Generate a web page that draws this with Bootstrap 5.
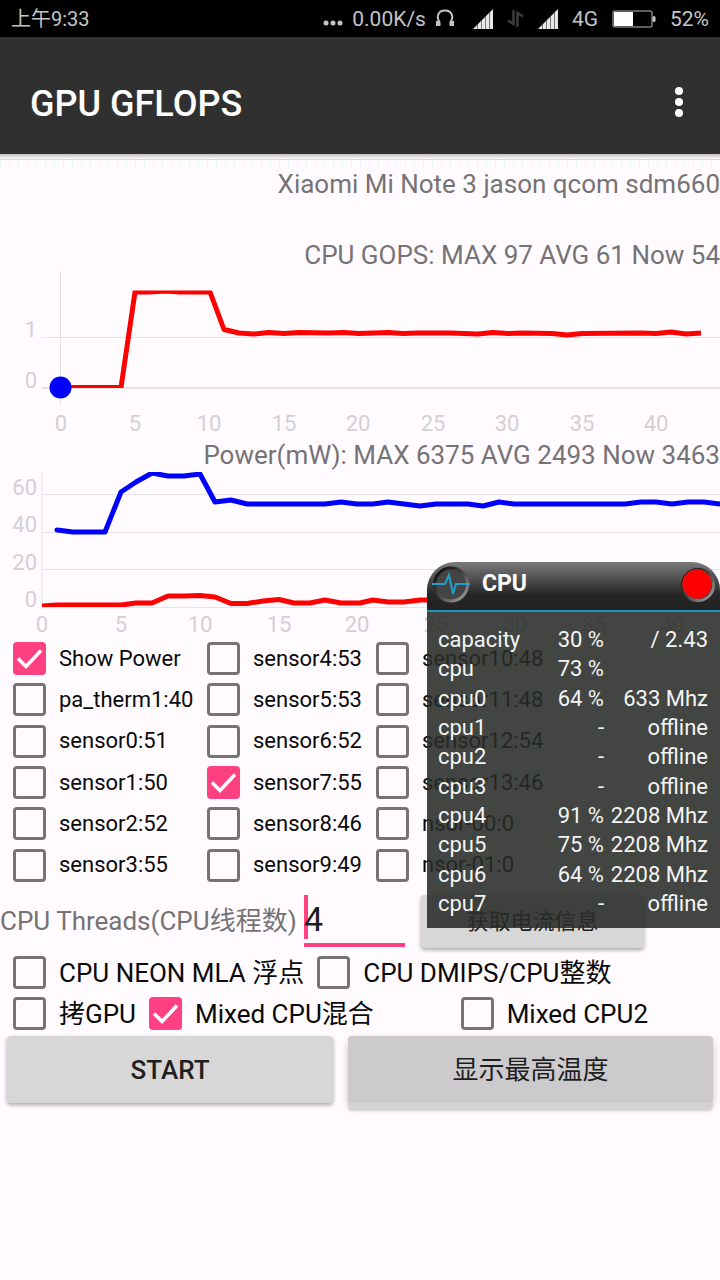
<!DOCTYPE html>
<html lang="zh-CN">
<head>
<meta charset="utf-8">
<meta name="viewport" content="width=device-width, initial-scale=1">
<title>GPU GFLOPS</title>
<link href="https://cdn.jsdelivr.net/npm/bootstrap@5.3.0/dist/css/bootstrap.min.css" rel="stylesheet">
<style>
  :root { --pink: #ff4081; --page: #fffbff; }
  body { background: var(--page); color: #0a0a0a; font-family: Roboto, "Noto Sans CJK SC", sans-serif; font-size: 26px; line-height: 30px; }
  .status-bar { height: 37px; background: #000; color: #c4c4c4; font-size: 20px; line-height: 38px; padding: 0 11px; }
  .status-icons { gap: 14px; font-size: 21px; }
  .status-net { gap: 9px; }
  .app-bar { height: 117px; background: #303030; padding: 17px 28px 0 30px; }
  .app-title { color: #fff; font-size: 36px; font-weight: 500; line-height: 44px; }
  .bar-edge { height: 15px; background:
      linear-gradient(#f3c3ee, #f3c3ee) 0 5px / 100% 1px no-repeat,
      linear-gradient(#bdbdbd, rgba(255,251,255,0)) 0 0 / 100% 5px no-repeat,
      repeating-linear-gradient(90deg, #e6f7f8 0 1px, transparent 1px 9px) 0 0 / 100% 12px no-repeat; }
  .caption { color: #757375; text-align: right; white-space: nowrap; }
  .device-line { margin-bottom: 41px; }
  .plot { display: block; width: 100%; }
  .plot text { font-size: 22px; fill: #d3d0d3; }
  .plot polyline { fill: none; stroke-width: 5; stroke-linejoin: round; }
  .plot line { stroke: #e6e2e6; }
  .sensors { display: grid; grid-template-columns: 194px 169px 1fr; grid-auto-rows: 1fr; min-height: 248px; font-size: 22px; }
  .tick { display: flex; align-items: center; gap: 13px; padding-left: 13px; white-space: nowrap; }
  .tick .form-check-input { float: none; flex: none; margin: 0; width: 33px; height: 33px; border: 3px solid #757375; border-radius: 4px; background-color: transparent; box-shadow: none; }
  .tick .form-check-input:checked { border: 0; background-color: var(--pink); background-size: 33px 33px;
      background-image: url("data:image/svg+xml,%3Csvg xmlns='http://www.w3.org/2000/svg' viewBox='0 0 33 33'%3E%3Cpath d='M5 16.500l8 8L28 8.500' fill='none' stroke='%23fff' stroke-width='3.500'/%3E%3C/svg%3E"); }
  .tick-row { height: 41px; }
  .threads { height: 66px; }
  .threads label { color: #757375; width: 304px; padding-top: 4px; white-space: nowrap; }
  .thread-box { position: relative; width: 101px; padding-top: 9px; }
  .thread-box::before { content: ""; position: absolute; left: 0; top: 9px; width: 4px; height: 44px; background: var(--pink); }
  .thread-box input { position: relative; display: block; width: 100%; height: 52px; border: 0; border-bottom: 4px solid var(--pink); border-radius: 0; background: transparent; color: #1c1c1c; font-size: 34px; line-height: 48px; padding: 0; outline: 0; }
  .key { border: 0; border-radius: 4px; background: #d7d7d7; color: #1f1f1f; font-size: 26px; font-weight: 500; line-height: 30px; padding: 0; box-shadow: 0 2px 4px rgba(0,0,0,.35); }
  .key-info { width: 223px; height: 53px; margin: 9px 0 0 16px; font-size: 22px; font-weight: 400; }
  .key-row { display: grid; grid-template-columns: 326fr 365fr; gap: 15px; padding: 2px 7px 24px; }
  .key-row .key { height: 67px; }
  .key-temp { background: #cdcacd; font-weight: 400; box-shadow: 0 8px 2px #d4d1d4, 0 4px 8px rgba(0,0,0,.2); }
  .stage { position: relative; }
  .monitor { position: absolute; right: 0; bottom: 24px; width: 293px; border-radius: 28px 28px 0 0; overflow: hidden; color: #f4f4f4; }
  .monitor-head { height: 50px; border-bottom: 2px solid #1d93bd; background: linear-gradient(#7a7a7a 0, #5c5c5c 25%, #262626 68%, #222 100%); padding: 0 5px; }
  .monitor-name { color: #fff; font-size: 23px; font-weight: 700; line-height: 28px; margin: 0 auto 5px 12px; }
  .monitor-body { background: rgba(40,43,39,.88); padding: 13px 12px 10px 11px; font-size: 22px; line-height: 29px; }
  .monitor-body table { width: 100%; height: 293px; border-collapse: collapse; white-space: nowrap; }
  .monitor-body th { font-weight: 400; }
  .monitor-body td { text-align: right; }
  .monitor-body th, .monitor-body td { padding: 0; }
  .col-load { width: 60px; }
  .col-clock { width: 104px; }
</style>
</head>
<body>
<header>
  <div class="status-bar d-flex align-items-center">
    <span class="me-auto">上午9:33</span>
    <div class="status-icons d-flex align-items-center">
      <span class="status-net d-flex align-items-center">
        <svg width="20" height="6" viewBox="0 0 20 6" fill="#c4c4c4" class="mt-2"><circle cx="3" cy="3" r="2.500"/><circle cx="10" cy="3" r="2.500"/><circle cx="17" cy="3" r="2.500"/></svg>
        <span>0.00K/s</span>
        <svg width="20" height="19" viewBox="0 0 20 19" fill="none" stroke="#c4c4c4" stroke-width="2"><path d="M4.500 17V13C1 8 3 1.500 10 1.500S19 8 15.500 13V17"/><path d="M2.500 12v5M17.500 12v5" stroke-width="3"/></svg>
      </span>
      <svg width="24" height="20" viewBox="-4 0 24 20" fill="#e8e8e8"><path d="M0 20L4 16V20ZM4.500 15.500L8 12V20H4.500ZM8.500 11.500L12 8V20H8.500ZM12.500 7.500L16 4V20H12.500ZM16.500 3.500L20 0V20H16.500Z"/></svg>
      <svg width="17" height="17" viewBox="0 0 17 17" fill="none" stroke="#3c3c3c" stroke-width="2.500"><path d="M6.500 0V14L1 10.500M10.500 17V3L16 6.500"/></svg>
      <svg width="20" height="20" viewBox="0 0 20 20" fill="#e8e8e8"><path d="M0 20L4 16V20ZM4.500 15.500L8 12V20H4.500ZM8.500 11.500L12 8V20H8.500ZM12.500 7.500L16 4V20H12.500ZM16.500 3.500L20 0V20H16.500Z"/></svg>
      <span>4G</span>
      <svg width="44" height="18" viewBox="0 0 44 18"><rect x="1" y="1" width="39" height="16" rx="2" fill="none" stroke="#7c7c7c" stroke-width="1.500"/><rect x="2" y="2" width="19" height="14" fill="#fff"/><rect x="40.500" y="6" width="3" height="6" rx="1.500" fill="#c4c4c4"/></svg>
      <span>52%</span>
    </div>
  </div>
  <div class="app-bar d-flex align-items-center">
    <h1 class="app-title m-0 me-auto">GPU GFLOPS</h1>
    <button type="button" class="btn p-0 border-0 d-flex" aria-label="更多">
      <svg width="26" height="34" viewBox="0 0 26 34" fill="#fff"><circle cx="13" cy="4" r="4"/><circle cx="13" cy="15" r="4"/><circle cx="13" cy="26" r="4"/></svg>
    </button>
  </div>
</header>
<main>
  <div class="stage">
    <div class="bar-edge"></div>
    <div class="caption device-line">Xiaomi Mi Note 3 jason qcom sdm660</div>
    <div class="caption">CPU GOPS: MAX 97 AVG 61 Now 54</div>
    <svg class="plot" viewBox="0 0 720 170">
      <clipPath id="gopsArea"><rect x="42" y="20.500" width="678" height="97.500"/></clipPath>
      <line x1="60.500" y1="1" x2="60.500" y2="135"/>
      <line x1="42" y1="67.500" x2="720" y2="67.500"/>
      <line x1="42" y1="118" x2="720" y2="118" stroke-width="2"/>
      <polyline clip-path="url(#gopsArea)" stroke="#f00" points="60,117.500 121,117.500 135,22 150,22 165,21 180,22 210,22 224,59.500 239,63 254,64 269,62.500 284,63.500 299,62.500 329,63 344,62.500 359,63.500 374,63 388,62.500 403,63.500 418,63 450,63 478,64 493,62.500 508,63.500 522,63 552,63.500 567,65 582,63.500 641,63 656,63.500 671,62 686,64 701,63"/>
      <circle cx="60.500" cy="117.500" r="11" fill="#00f"/>
      <g text-anchor="end"><text x="37" y="67">1</text><text x="37" y="118">0</text></g>
      <g text-anchor="middle"><text x="61" y="161">0</text><text x="135" y="161">5</text><text x="209" y="161">10</text><text x="284" y="161">15</text><text x="358" y="161">20</text><text x="433" y="161">25</text><text x="507" y="161">30</text><text x="582" y="161">35</text><text x="656" y="161">40</text></g>
    </svg>
    <div class="caption">Power(mW): MAX 6375 AVG 2493 Now 3463</div>
    <svg class="plot" viewBox="0 0 720 168">
      <clipPath id="powerArea"><rect x="42" y="2" width="678" height="135"/></clipPath>
      <path d="M42 2V137M42 24.500H720M42 62.500H720M42 99.500H720M42 137.500H720" stroke="#e6e2e6" fill="none"/>
      <polyline clip-path="url(#powerArea)" stroke="#f00" points="42,136 57,135 121,135 136,133 152,133 168,126 184,126 200,125.500 215,127 231,133.500 247,133.500 263,131 279,129.500 294,133 310,133 325,130 341,133 360,133 373,130 388,132 404,132 420,130 440,130"/>
      <polyline clip-path="url(#powerArea)" stroke="#00f" stroke-linecap="round" points="57,60 73,62 105,62 121,22 136,12 152,3 168,6 184,6 200,4 215,32 231,30 247,34 325,34 341,32 357,34 373,34 388,32 404,34 420,36 436,34 468,34 483,36 499,32 514,34 625,34 641,32 656,32 672,34 688,32 704,32 720,34"/>
      <g text-anchor="end"><text x="37" y="25">60</text><text x="37" y="62">40</text><text x="37" y="100">20</text><text x="37" y="137">0</text></g>
      <g text-anchor="middle"><text x="42" y="162">0</text><text x="121" y="162">5</text><text x="200" y="162">10</text><text x="279" y="162">15</text><text x="357" y="162">20</text><text x="436" y="162">25</text><text x="515" y="162">30</text><text x="594" y="162">35</text><text x="672" y="162">40</text></g>
    </svg>
    <div class="sensors">
      <label class="tick"><input class="form-check-input" type="checkbox" checked>Show Power</label>
      <label class="tick"><input class="form-check-input" type="checkbox">sensor4:53</label>
      <label class="tick"><input class="form-check-input" type="checkbox">sensor10:48</label>
      <label class="tick"><input class="form-check-input" type="checkbox">pa_therm1:40</label>
      <label class="tick"><input class="form-check-input" type="checkbox">sensor5:53</label>
      <label class="tick"><input class="form-check-input" type="checkbox">sensor11:48</label>
      <label class="tick"><input class="form-check-input" type="checkbox">sensor0:51</label>
      <label class="tick"><input class="form-check-input" type="checkbox">sensor6:52</label>
      <label class="tick"><input class="form-check-input" type="checkbox">sensor12:54</label>
      <label class="tick"><input class="form-check-input" type="checkbox">sensor1:50</label>
      <label class="tick"><input class="form-check-input" type="checkbox" checked>sensor7:55</label>
      <label class="tick"><input class="form-check-input" type="checkbox">sensor13:46</label>
      <label class="tick"><input class="form-check-input" type="checkbox">sensor2:52</label>
      <label class="tick"><input class="form-check-input" type="checkbox">sensor8:46</label>
      <label class="tick"><input class="form-check-input" type="checkbox">nsor-00:0</label>
      <label class="tick"><input class="form-check-input" type="checkbox">sensor3:55</label>
      <label class="tick"><input class="form-check-input" type="checkbox">sensor9:49</label>
      <label class="tick"><input class="form-check-input" type="checkbox">nsor-01:0</label>
    </div>
    <div class="threads d-flex align-items-start">
      <label for="threads" class="align-self-center">CPU Threads(CPU线程数)</label>
      <div class="thread-box"><input id="threads" type="text" inputmode="numeric" value="4"></div>
      <button type="button" class="key key-info">获取电流信息</button>
    </div>
    <section class="monitor" aria-label="CPU">
      <div class="monitor-head d-flex align-items-center">
        <svg width="38" height="40" viewBox="0 0 38 40" fill="none">
          <defs><linearGradient id="rim" x1="0" y1="0" x2="1" y2="1"><stop offset="0.100" stop-color="#111"/><stop offset="0.500" stop-color="#444"/><stop offset="1" stop-color="#aaa"/></linearGradient></defs>
          <circle cx="19" cy="18.500" r="16.500" fill="#444" stroke="url(#rim)" stroke-width="3"/>
          <path d="M0 18h13l4-9 4 19 3-10h14" stroke="#1da0cc" stroke-width="2"/>
        </svg>
        <h2 class="monitor-name">CPU</h2>
        <button type="button" class="btn p-0 border-0 d-flex" aria-label="关闭">
          <svg width="36" height="38" viewBox="0 0 36 38"><circle cx="19" cy="18" r="15.500" fill="#222" stroke="url(#rim)" stroke-width="3"/><circle cx="18" cy="17" r="14.500" fill="#f00" stroke="#c22" stroke-width="1"/></svg>
        </button>
      </div>
      <div class="monitor-body">
        <table>
          <colgroup><col><col class="col-load"><col class="col-clock"></colgroup>
          <tbody>
            <tr><th scope="row">capacity</th><td>30 %</td><td>/ 2.43</td></tr>
            <tr><th scope="row">cpu</th><td>73 %</td><td></td></tr>
            <tr><th scope="row">cpu0</th><td>64 %</td><td>633 Mhz</td></tr>
            <tr><th scope="row">cpu1</th><td>-</td><td>offline</td></tr>
            <tr><th scope="row">cpu2</th><td>-</td><td>offline</td></tr>
            <tr><th scope="row">cpu3</th><td>-</td><td>offline</td></tr>
            <tr><th scope="row">cpu4</th><td>91 %</td><td>2208 Mhz</td></tr>
            <tr><th scope="row">cpu5</th><td>75 %</td><td>2208 Mhz</td></tr>
            <tr><th scope="row">cpu6</th><td>64 %</td><td>2208 Mhz</td></tr>
            <tr><th scope="row">cpu7</th><td>-</td><td>offline</td></tr>
          </tbody>
        </table>
      </div>
    </section>
  </div>
  <div class="tick-row d-flex">
    <label class="tick"><input class="form-check-input" type="checkbox">CPU NEON MLA 浮点</label>
    <label class="tick"><input class="form-check-input" type="checkbox">CPU DMIPS/CPU整数</label>
  </div>
  <div class="tick-row d-flex">
    <label class="tick"><input class="form-check-input" type="checkbox">拷GPU</label>
    <label class="tick"><input class="form-check-input" type="checkbox" checked>Mixed CPU混合</label>
    <label class="tick ms-auto pe-5 me-4"><input class="form-check-input" type="checkbox">Mixed CPU2</label>
  </div>
  <div class="key-row">
    <button type="button" class="key">START</button>
    <button type="button" class="key key-temp">显示最高温度</button>
  </div>
</main>
<script src="https://cdn.jsdelivr.net/npm/bootstrap@5.3.0/dist/js/bootstrap.bundle.min.js"></script>
</body>
</html>
